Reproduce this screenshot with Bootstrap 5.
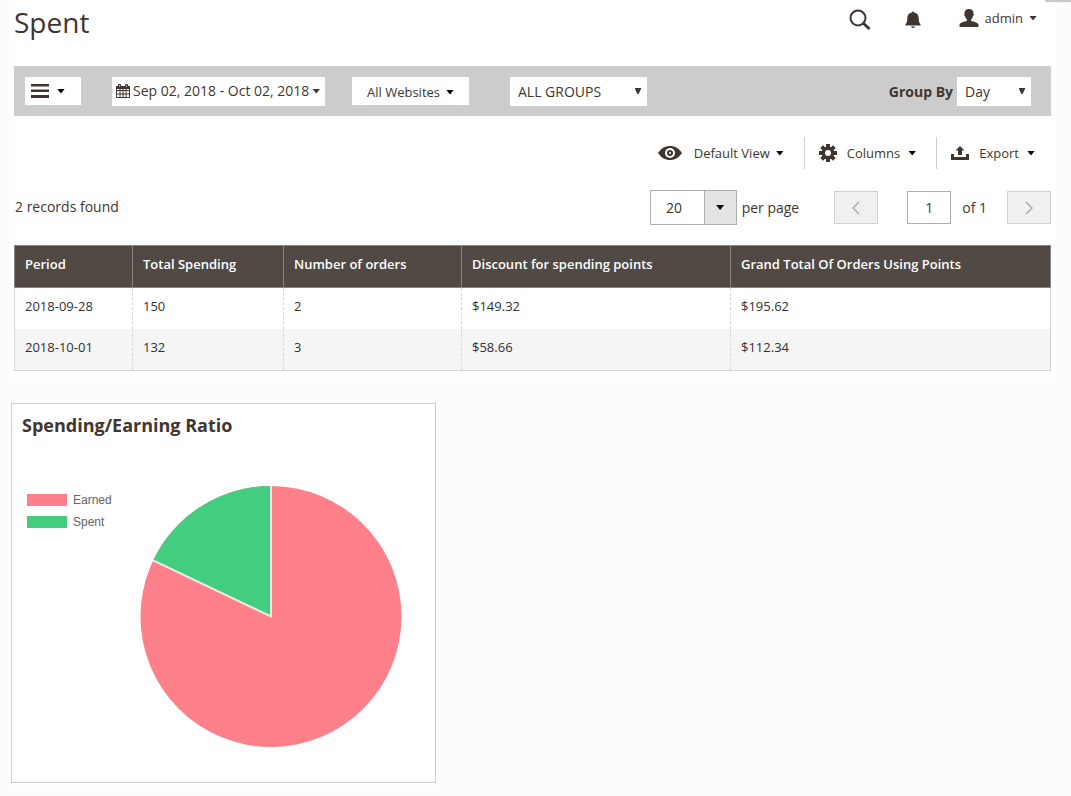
<!DOCTYPE html>
<html lang="en">
<head>
<meta charset="utf-8">
<meta name="viewport" content="width=device-width, initial-scale=1">
<title>Spent</title>
<link href="https://cdn.jsdelivr.net/npm/bootstrap@5.3.0/dist/css/bootstrap.min.css" rel="stylesheet">
<style>
  body { font-family: "Open Sans", sans-serif; font-size: 14px; line-height: 20px; color: #41362f; background: #fcfcfc; }
  svg { display: block; flex: none; }
  h1 { font-size: 28px; line-height: 34px; font-weight: 400; }
  .report { margin: 0 15px 0 9px; padding: 0 5px 6px; background: #fff; }
  .corner { position: absolute; top: 0; right: 0; width: 26px; height: 2px; background: #c9c9c9; border-bottom-left-radius: 2px; box-shadow: 0 0 2px #ddd; }
  .page-head { height: 66px; padding: 5px 14px 0 0; }
  .tool { border: 0; border-radius: 0; background: #fff; color: #41362f; padding: 0; font-size: 14px; line-height: 20px; display: flex; align-items: center; text-align: left; }
  .plain { background: transparent; font-size: 13px; }
  .head-tools { gap: 34px; padding-top: 3px; }
  .user-btn { padding: 0 0 3px 4px; gap: 6px; }
  .caret { width: 8px; height: 5px; background: #000; clip-path: polygon(0 0, 100% 0, 50% 100%); flex: none; }
  .caret-brown { background: #41362f; }
  .filters { background: #ccc; min-height: 50px; padding: 11px 20px 10px 11px; }
  .menu-btn { width: 56px; height: 28px; padding-left: 6px; gap: 8px; }
  .date-btn { width: 213px; height: 29px; padding: 0 0 1px 4px; gap: 3px; margin-left: 31px; white-space: nowrap; }
  .site-btn { width: 117px; height: 28px; padding: 2px 0 0 15px; gap: 6px; font-size: 13px; margin-left: 27px; }
  .pick { appearance: none; border: 0; border-radius: 0; height: 29px; padding: 0 8px; color: #41362f; font-size: 14px; line-height: 20px;
    background: #fff url("data:image/svg+xml,%3Csvg xmlns='http://www.w3.org/2000/svg' viewBox='0 0 6 6'%3E%3Cpath d='M0 0h6v1L3.6 6H2.4L0 1z' fill='%2341362f'/%3E%3C/svg%3E") no-repeat right 6px top 11px / 6px 6px; }
  .groups { width: 137px; margin-left: 41px; }
  .day { width: 74px; margin-left: 4px; }
  .group-label { font-weight: 700; }
  .actions { height: 74px; padding: 21px 16px 0 0; }
  .action { height: 32px; gap: 10px; }
  .action + .action { border-left: 1px solid #ccc; padding-left: 14px; }
  .action .caret { margin-left: -2px; }
  .view-btn { gap: 12px; }
  .view-btn .caret { margin-left: -6px; }
  .action:not(:last-child) { padding-right: 20px; }
  .pager { height: 55px; }
  .records { padding: 7px 0 0 1px; }
  .box { border: 1px solid #adadad; border-radius: 0; background: #fff; height: 33px; color: #41362f; font-size: 14px; padding: 0; text-align: center; }
  .num { width: 44px; margin: 0 11px 0 29px; }
  .size { width: 55px; height: 35px; padding-right: 6px; }
  .size-btn { width: 33px; height: 35px; margin-left: -1px; background: #e3e3e3; }
  .per-page { margin: 0 35px 0 5px; }
  .of-pages { margin-right: 20px; }
  .step-btn { width: 44px; background: #f0f0f0; border-color: #d1d1d1; }
  .grid-table { width: 100%; table-layout: fixed; border-collapse: collapse; font-size: 13px; line-height: 20px; margin: 0; color: #303030; }
  .grid-table th { background: #514943; color: #fff; font-weight: 600; border: 1px solid #8a837f; padding: 8px 10px 13px; height: 42px; }
  .grid-table td { border: 1px dashed #d6d6d6; border-width: 0 1px; padding: 8px 10px 13px; height: 41px; }
  .grid-table td:first-child { border-left: 1px solid #d6d6d6; }
  .grid-table td:last-child { border-right: 1px solid #d6d6d6; }
  .grid-table tbody tr:nth-child(2) td { background: #f5f5f5; border-bottom: 1px solid #d6d6d6; }
  .c1 { width: 118px; } .c2 { width: 151px; } .c3 { width: 178px; } .c4 { width: 269px; }
  .ratio-card { margin: 24px 0 0 9px; width: 429px; max-width: 100%; border: 2px solid #fff; background: #fff; }
  .ratio-inner { border: 1px solid #ccc; padding: 9px 10px 33px; }
  .ratio-inner h2 { font-size: 18px; line-height: 25px; font-weight: 700; margin: 0; }
  .chart { padding: 47px 22px 0 5px; }
  .legend-list { font: 12px/22px "Liberation Sans", Arial, sans-serif; color: #666; margin: 4px 0 0; padding: 0; list-style: none; }
  .legend-list li { display: flex; align-items: center; gap: 6px; }
  .swatch { width: 40px; height: 12px; }
  .earned { background: #fd808a; } .spent { background: #43cd80; }
</style>
</head>
<body>
<div class="corner"></div>
<main class="report">
  <header class="page-head d-flex justify-content-between align-items-start">
    <h1 class="m-0">Spent</h1>
    <div class="head-tools d-flex align-items-center">
      <button class="tool plain" aria-label="Search">
        <svg width="22" height="22" viewBox="0 0 22 22" fill="none" stroke="#41362f"><circle cx="9" cy="9" r="7.500" stroke-width="2"/><path d="M14 14l6.500 6" stroke-width="3"/></svg>
      </button>
      <button class="tool plain" aria-label="Notifications">
        <svg width="16" height="18" viewBox="0 0 16 18" fill="#41362f"><path d="M7 1.500a1 1 0 0 1 2 0c3.400.6 4.700 3 4.700 6 0 3 .6 4.500 1.800 5.500v1.500H.5V13c1.200-1 1.800-2.500 1.800-5.500 0-3 1.300-5.400 4.700-6zM6 15.500h4q-.5 1.500-2 1.500t-2-1.500z"/></svg>
      </button>
      <button class="tool plain user-btn">
        <svg width="20" height="18" viewBox="0 0 20 18" fill="#41362f"><path d="M10 0c3 0 4.700 2 4.500 4.700.6.800.2 2-.5 2.400-.4 1.700-1 2.600-1.800 3.200v1.500c2 1.200 7 1.500 7.300 3.800V18H.5v-2.400c.3-2.300 5.300-2.600 7.300-3.800v-1.500C7 9.700 6.400 8.800 6 7.100c-.7-.4-1.100-1.600-.5-2.400C5.300 2 7 0 10 0z"/></svg>
        <span>admin</span><span class="caret caret-brown"></span>
      </button>
    </div>
  </header>

  <section class="filters d-flex align-items-start">
    <button class="tool menu-btn" aria-label="Menu">
      <svg width="18" height="14" viewBox="0 0 18 14" fill="#41362f"><path d="M0 0h18v2.500H0zM0 5.500h18V8H0zM0 11h18v3H0z"/></svg>
      <span class="caret"></span>
    </button>
    <button class="tool date-btn">
      <svg width="14" height="14" viewBox="0 0 14 14"><path d="M.5 3h13v10.500H.5zM.5 6.500h13M.5 10h13M4 5v8M7 5v8M10 5v8" fill="none" stroke="#41362f"/><path d="M0 2h14v3H0z" fill="#41362f"/><path d="M2.500.5h2v3h-2zM9.500.5h2v3h-2z" fill="#aaa" stroke="#41362f"/></svg>
      <span>Sep 02, 2018 - Oct 02, 2018</span><span class="caret caret-brown"></span>
    </button>
    <button class="tool site-btn"><span>All Websites</span><span class="caret"></span></button>
    <select class="pick groups" aria-label="Customer group"><option>ALL GROUPS</option></select>
    <div class="d-flex align-items-center ms-auto">
      <label class="group-label" for="group-by">Group By</label>
      <select class="pick day" id="group-by"><option>Day</option></select>
    </div>
  </section>

  <div class="actions d-flex justify-content-end align-items-start">
    <button class="tool plain action view-btn">
      <svg width="24" height="14" viewBox="0 0 24 14"><path d="M0 7C3 2.500 7 0 12 0s9 2.500 12 7c-3 4.500-7 7-12 7S3 11.500 0 7z" fill="#41362f"/><circle cx="12" cy="7" r="5" fill="#fff"/><circle cx="12" cy="7" r="3" fill="#41362f"/><circle cx="12" cy="7" r="1" fill="#fff"/></svg>
      <span>Default View</span><span class="caret"></span>
    </button>
    <button class="tool plain action">
      <svg width="18" height="18" viewBox="-9 -9 18 18"><g stroke="#41362f" stroke-width="4"><path d="M0-9V9M-9 0H9M-6.300-6.300L6.300 6.300M6.300-6.300L-6.300 6.300"/></g><circle r="6.500" fill="#41362f"/><circle r="3" fill="#fff"/></svg>
      <span>Columns</span><span class="caret"></span>
    </button>
    <button class="tool plain action">
      <svg width="18" height="14" viewBox="0 0 18 14" fill="#41362f"><path d="M0 8h3v3h12V8h3v6H0zM9 0l4.500 4.500H11V9H7V4.500H4.500z"/></svg>
      <span>Export</span><span class="caret"></span>
    </button>
  </div>

  <div class="pager d-flex align-items-start">
    <span class="records">2 records found</span>
    <div class="d-flex align-items-center ms-auto">
      <input class="box size" id="page-size" value="20"><button class="box size-btn d-flex align-items-center justify-content-center" aria-label="Choose page size"><span class="caret"></span></button>
      <label class="per-page" for="page-size">per page</label>
      <button class="box step-btn d-flex align-items-center justify-content-center" aria-label="Previous page"><svg width="8" height="14" viewBox="0 0 8 14" fill="none" stroke="#aaa" stroke-width="1.500"><path d="M7 1L1 7l6 6"/></svg></button>
      <input class="box num" id="page-no" value="1">
      <label class="of-pages" for="page-no">of 1</label>
      <button class="box step-btn d-flex align-items-center justify-content-center" aria-label="Next page"><svg width="8" height="14" viewBox="0 0 8 14" fill="none" stroke="#aaa" stroke-width="1.500"><path d="M1 1l6 6-6 6"/></svg></button>
    </div>
  </div>

  <table class="grid-table">
    <colgroup><col class="c1"><col class="c2"><col class="c3"><col class="c4"><col></colgroup>
    <thead><tr><th>Period</th><th>Total Spending</th><th>Number of orders</th><th>Discount for spending points</th><th>Grand Total Of Orders Using Points</th></tr></thead>
    <tbody>
      <tr><td>2018-09-28</td><td>150</td><td>2</td><td>$149.32</td><td>$195.62</td></tr>
      <tr><td>2018-10-01</td><td>132</td><td>3</td><td>$58.66</td><td>$112.34</td></tr>
    </tbody>
  </table>
</main>

<section class="ratio-card">
  <div class="ratio-inner">
    <h2>Spending/Earning Ratio</h2>
    <div class="chart d-flex justify-content-between align-items-start">
      <ul class="legend-list">
        <li><span class="swatch earned"></span>Earned</li>
        <li><span class="swatch spent"></span>Spent</li>
      </ul>
      <svg width="264" height="264" viewBox="-132 -131.500 264 264" role="img" aria-label="Earned 82%, spent 18%">
        <circle r="130.500" fill="#fd808a"/>
        <path d="M0 0L-117.800-56.100A130.500 130.500 0 0 1 0-130.500z" fill="#43cd80"/>
        <path d="M-117.800-56.100L0 0V-130.500" fill="none" stroke="#fff" stroke-opacity=".8" stroke-width="2"/>
      </svg>
    </div>
  </div>
</section>
<script src="https://cdn.jsdelivr.net/npm/bootstrap@5.3.0/dist/js/bootstrap.bundle.min.js"></script>
</body>
</html>
